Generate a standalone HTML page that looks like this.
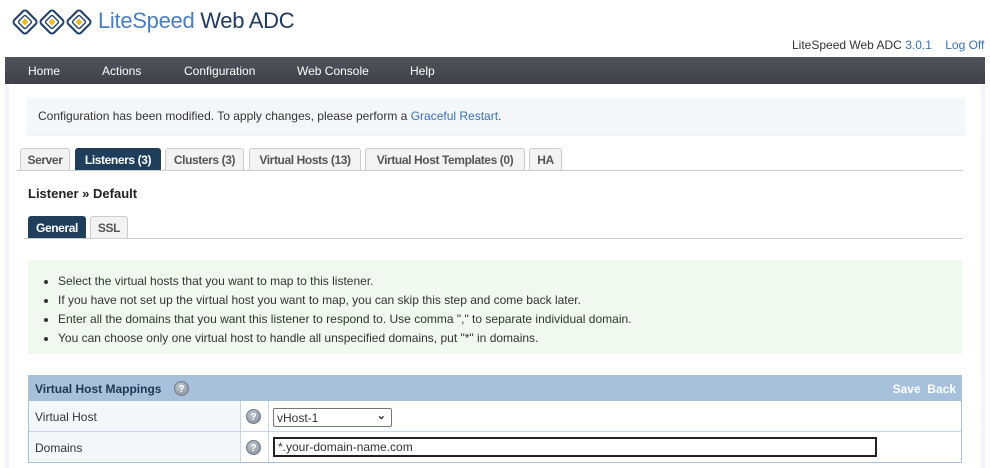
<!DOCTYPE html>
<html><head><style>
*{box-sizing:border-box;margin:0;padding:0}
body{width:990px;height:468px;background:#fff;font-family:"Liberation Sans",sans-serif;font-size:12px;color:#333;position:relative;overflow:hidden}
.abs{position:absolute}
.nav{left:5px;top:57px;width:980px;height:27px;background:linear-gradient(#51545c,#3e4046);}
.nav span{position:absolute;top:7px;color:#fff;font-size:12px}
.wrap{left:5px;top:84px;width:980px;height:384px;border-left:4px solid #f2f6fa;border-right:4px solid #f2f6fa}
.notice{left:28px;top:98px;width:936px;height:36px;background:#f4f7fa;box-shadow:0 1px 2px #e3e7ec;padding:11px 10px;font-size:12px}
a{color:#3a70b5;text-decoration:none}
.tab{position:absolute;top:148px;height:22px;border:1px solid #ccc;border-bottom:none;background:#f3f3f3;border-radius:3px 3px 0 0;font-weight:bold;font-size:12px;color:#555;padding:4px 0 0;white-space:nowrap;text-align:center;letter-spacing:-0.4px;overflow:hidden}
.tab.on{background:#1f3e5c;color:#fff;border-color:#1f3e5c}
.green{left:28px;top:260px;width:934px;height:94px;background:#eff9ee;padding:12px 0 0 30px;font-size:12px;color:#333}
.green li{line-height:19px}
.tbl{left:28px;top:375px;width:934px;height:88px;border:1px solid #a7c1dd}
.hq{display:inline-block;width:15px;height:15px;border-radius:50%;background:radial-gradient(circle at 40% 35%,#c3c9d1,#7f8a98);color:#fff;font-size:10px;font-weight:bold;text-align:center;line-height:15px;border:1px solid #6f7b89}
</style></head><body>
<svg class="abs" style="left:11px;top:8px" width="82" height="28" viewBox="0 0 82 28">
<g fill="none" stroke="#1f3f6b" stroke-width="2" stroke-linejoin="round">
<rect x="5" y="5" width="18" height="18" rx="3" transform="rotate(45 14 14)"/>
<rect x="9" y="9" width="10" height="10" rx="1.5" transform="rotate(45 14 14)" stroke-width="1.4"/>
<rect x="32" y="5" width="18" height="18" rx="3" transform="rotate(45 41 14)"/>
<rect x="36" y="9" width="10" height="10" rx="1.5" transform="rotate(45 41 14)" stroke-width="1.4"/>
<rect x="59" y="5" width="18" height="18" rx="3" transform="rotate(45 68 14)"/>
<rect x="63" y="9" width="10" height="10" rx="1.5" transform="rotate(45 68 14)" stroke-width="1.4"/>
</g>
<g fill="#f2b823"><rect x="11.5" y="11.5" width="5" height="5" transform="rotate(45 14 14)"/><rect x="38.5" y="11.5" width="5" height="5" transform="rotate(45 41 14)"/><rect x="65.5" y="11.5" width="5" height="5" transform="rotate(45 68 14)"/></g>
</svg>
<div class="abs" style="left:98px;top:8px;font-size:22px;color:#4a7ec2;letter-spacing:-0.3px">LiteSpeed<span style="color:#1f3a5f"> Web ADC</span></div>
<div class="abs" style="left:792px;top:38px;font-size:12px;color:#333">LiteSpeed Web ADC <a>3.0.1</a> &nbsp;&nbsp;&nbsp;<a>Log Off</a></div>
<div class="abs nav"><span style="left:23px">Home</span><span style="left:97px">Actions</span><span style="left:179px">Configuration</span><span style="left:292px">Web Console</span><span style="left:405px">Help</span></div>
<div class="abs wrap"></div>
<div class="abs notice">Configuration has been modified. To apply changes, please perform a <a>Graceful Restart</a>.</div>
<div class="tab" style="left:20px;width:50px">Server</div>
<div class="tab on" style="left:75px;width:86px">Listeners (3)</div>
<div class="tab" style="left:165px;width:79px">Clusters (3)</div>
<div class="tab" style="left:249px;width:112px">Virtual Hosts (13)</div>
<div class="tab" style="left:365px;width:160px">Virtual Host Templates (0)</div>
<div class="tab" style="left:529px;width:33px">HA</div>
<div class="abs" style="left:17px;top:170px;width:946px;height:1px;background:#ccc"></div>
<div class="abs" style="left:28px;top:186px;font-size:13px;font-weight:bold;color:#222">Listener » Default</div>
<div class="tab on" style="left:28px;top:216px;width:58px;height:22px">General</div>
<div class="tab" style="left:90px;top:216px;width:38px;height:22px">SSL</div>
<div class="abs" style="left:24px;top:238px;width:939px;height:1px;background:#ccc"></div>
<div class="abs green"><ul>
<li>Select the virtual hosts that you want to map to this listener.</li>
<li>If you have not set up the virtual host you want to map, you can skip this step and come back later.</li>
<li>Enter all the domains that you want this listener to respond to. Use comma "," to separate individual domain.</li>
<li>You can choose only one virtual host to handle all unspecified domains, put "*" in domains.</li></ul></div>
<div class="abs tbl">
<div class="abs" style="left:0;top:0;width:932px;height:25px;background:#a7c1dd"></div>
<div class="abs" style="left:6px;top:6px;font-weight:bold;color:#1f3555">Virtual Host Mappings</div>
<div class="abs" style="left:145px;top:5px"><span class="hq">?</span></div>
<div class="abs" style="right:5px;top:6px;font-weight:bold;color:#fff">Save &nbsp;Back</div>
<div class="abs" style="left:0;top:25px;width:212px;height:61px;background:#f4f7fa;border-right:1px solid #c7d6e6"></div>
<div class="abs" style="left:212px;top:25px;width:28px;height:61px;border-right:1px solid #c7d6e6"></div>
<div class="abs" style="left:0;top:55px;width:932px;height:1px;background:#c7d6e6"></div>
<div class="abs" style="left:6px;top:34px">Virtual Host</div>
<div class="abs" style="left:6px;top:65px">Domains</div>
<div class="abs" style="left:217px;top:33px"><span class="hq">?</span></div>
<div class="abs" style="left:217px;top:64px"><span class="hq">?</span></div>
<div class="abs" style="left:244px;top:32px;width:119px;height:19px;border:1px solid #777;border-radius:2px;padding:2px 3px;font-size:12px">vHost-1<span style="position:absolute;right:5px;top:0px;font-size:11px;font-weight:bold">&#8964;</span></div>
<div class="abs" style="left:244px;top:61px;width:604px;height:20px;border:2px solid #222;padding:1px 3px;font-size:12px">*.your-domain-name.com</div>
</div>
</body></html>
